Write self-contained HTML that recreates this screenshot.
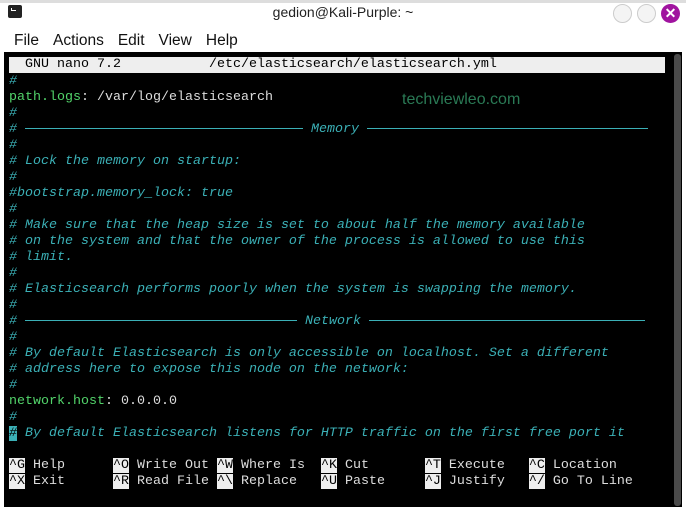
<!DOCTYPE html><html><head><style>
body{margin:0;width:686px;height:509px;background:#fff;font-family:"Liberation Sans",sans-serif;overflow:hidden;position:relative}
.top{position:absolute;left:0;top:0;width:686px;height:3px;background:#ddd}
.title{position:absolute;top:4px;left:0;width:686px;text-align:center;font-size:14px;color:#222}
.menu{position:absolute;top:32px;left:14px;font-size:15.5px;color:#111;word-spacing:0}
.menu span{margin-right:14px}
.btn{position:absolute;top:4px;width:17px;height:17px;border-radius:50%;border:1px solid #ccc;background:#f4f4f4}
.term{position:absolute;left:4px;top:52px;width:678px;height:455px;background:#000}
.sb{position:absolute;left:674px;top:54px;width:7px;height:452px;background:#4a4a4a;border-radius:3px}
.r{position:absolute;left:9px;height:16px;line-height:16px;font-family:"Liberation Mono",monospace;font-size:13.33px;color:#ddd;white-space:pre;margin-top:2px}
.c{color:#3bb0b6;font-style:italic}
.g{color:#52d36a}
.k{background:#eee;color:#000}
.ln{display:inline-block;border-top:1px solid #3bb0b6;vertical-align:middle}
.wm{position:absolute;left:402px;top:91px;font-size:16px;color:#2a7a55}
</style></head><body>
<div class="top"></div>
<div style="position:absolute;left:8px;top:5px;width:14px;height:13px;background:#222;border-radius:2px"><div style="position:absolute;left:3px;top:3px;width:4px;height:2px;border-left:1px solid #fff;border-bottom:1px solid #fff"></div></div>
<div class="title">gedion@Kali-Purple: ~</div>
<div class="btn" style="left:613px"></div><div class="btn" style="left:637px"></div>
<div style="position:absolute;left:661px;top:4px;width:19px;height:19px;border-radius:50%;background:#a0139f;color:#fff;text-align:center;line-height:19px;font-size:14px;font-weight:bold">✕</div>
<div class="menu"><span>File</span><span>Actions</span><span>Edit</span><span>View</span><span>Help</span></div>
<div class="term"></div><div class="sb"></div>
<div class="r" style="top:55px;width:656px;background:#eee;color:#000">  GNU nano 7.2           /etc/elasticsearch/elasticsearch.yml</div>
<div class="r c" style="top:72px">#</div>
<div class="r" style="top:88px"><span class="g">path.logs</span>: /var/log/elasticsearch</div>
<div class="wm">techviewleo.com</div>
<div class="r c" style="top:104px">#</div>
<div class="r c" style="top:120px"># <span class="ln" style="width:278px"></span> Memory <span class="ln" style="width:281px"></span></div>
<div class="r c" style="top:136px">#</div>
<div class="r c" style="top:152px"># Lock the memory on startup:</div>
<div class="r c" style="top:168px">#</div>
<div class="r c" style="top:184px">#bootstrap.memory_lock: true</div>
<div class="r c" style="top:200px">#</div>
<div class="r c" style="top:216px"># Make sure that the heap size is set to about half the memory available</div>
<div class="r c" style="top:232px"># on the system and that the owner of the process is allowed to use this</div>
<div class="r c" style="top:248px"># limit.</div>
<div class="r c" style="top:264px">#</div>
<div class="r c" style="top:280px"># Elasticsearch performs poorly when the system is swapping the memory.</div>
<div class="r c" style="top:296px">#</div>
<div class="r c" style="top:312px"># <span class="ln" style="width:272px"></span> Network <span class="ln" style="width:276px"></span></div>
<div class="r c" style="top:328px">#</div>
<div class="r c" style="top:344px"># By default Elasticsearch is only accessible on localhost. Set a different</div>
<div class="r c" style="top:360px"># address here to expose this node on the network:</div>
<div class="r c" style="top:376px">#</div>
<div class="r" style="top:392px"><span class="g">network.host</span>: 0.0.0.0</div>
<div class="r c" style="top:408px">#</div>
<div class="r c" style="top:424px"><span style="background:#3bb0b6;color:#000">#</span> By default Elasticsearch listens for HTTP traffic on the first free port it</div>
<div class="r" style="top:456px"><span class="k">^G</span> Help      <span class="k">^O</span> Write Out <span class="k">^W</span> Where Is  <span class="k">^K</span> Cut       <span class="k">^T</span> Execute   <span class="k">^C</span> Location</div>
<div class="r" style="top:472px"><span class="k">^X</span> Exit      <span class="k">^R</span> Read File <span class="k">^\</span> Replace   <span class="k">^U</span> Paste     <span class="k">^J</span> Justify   <span class="k">^/</span> Go To Line</div>
</body></html>
